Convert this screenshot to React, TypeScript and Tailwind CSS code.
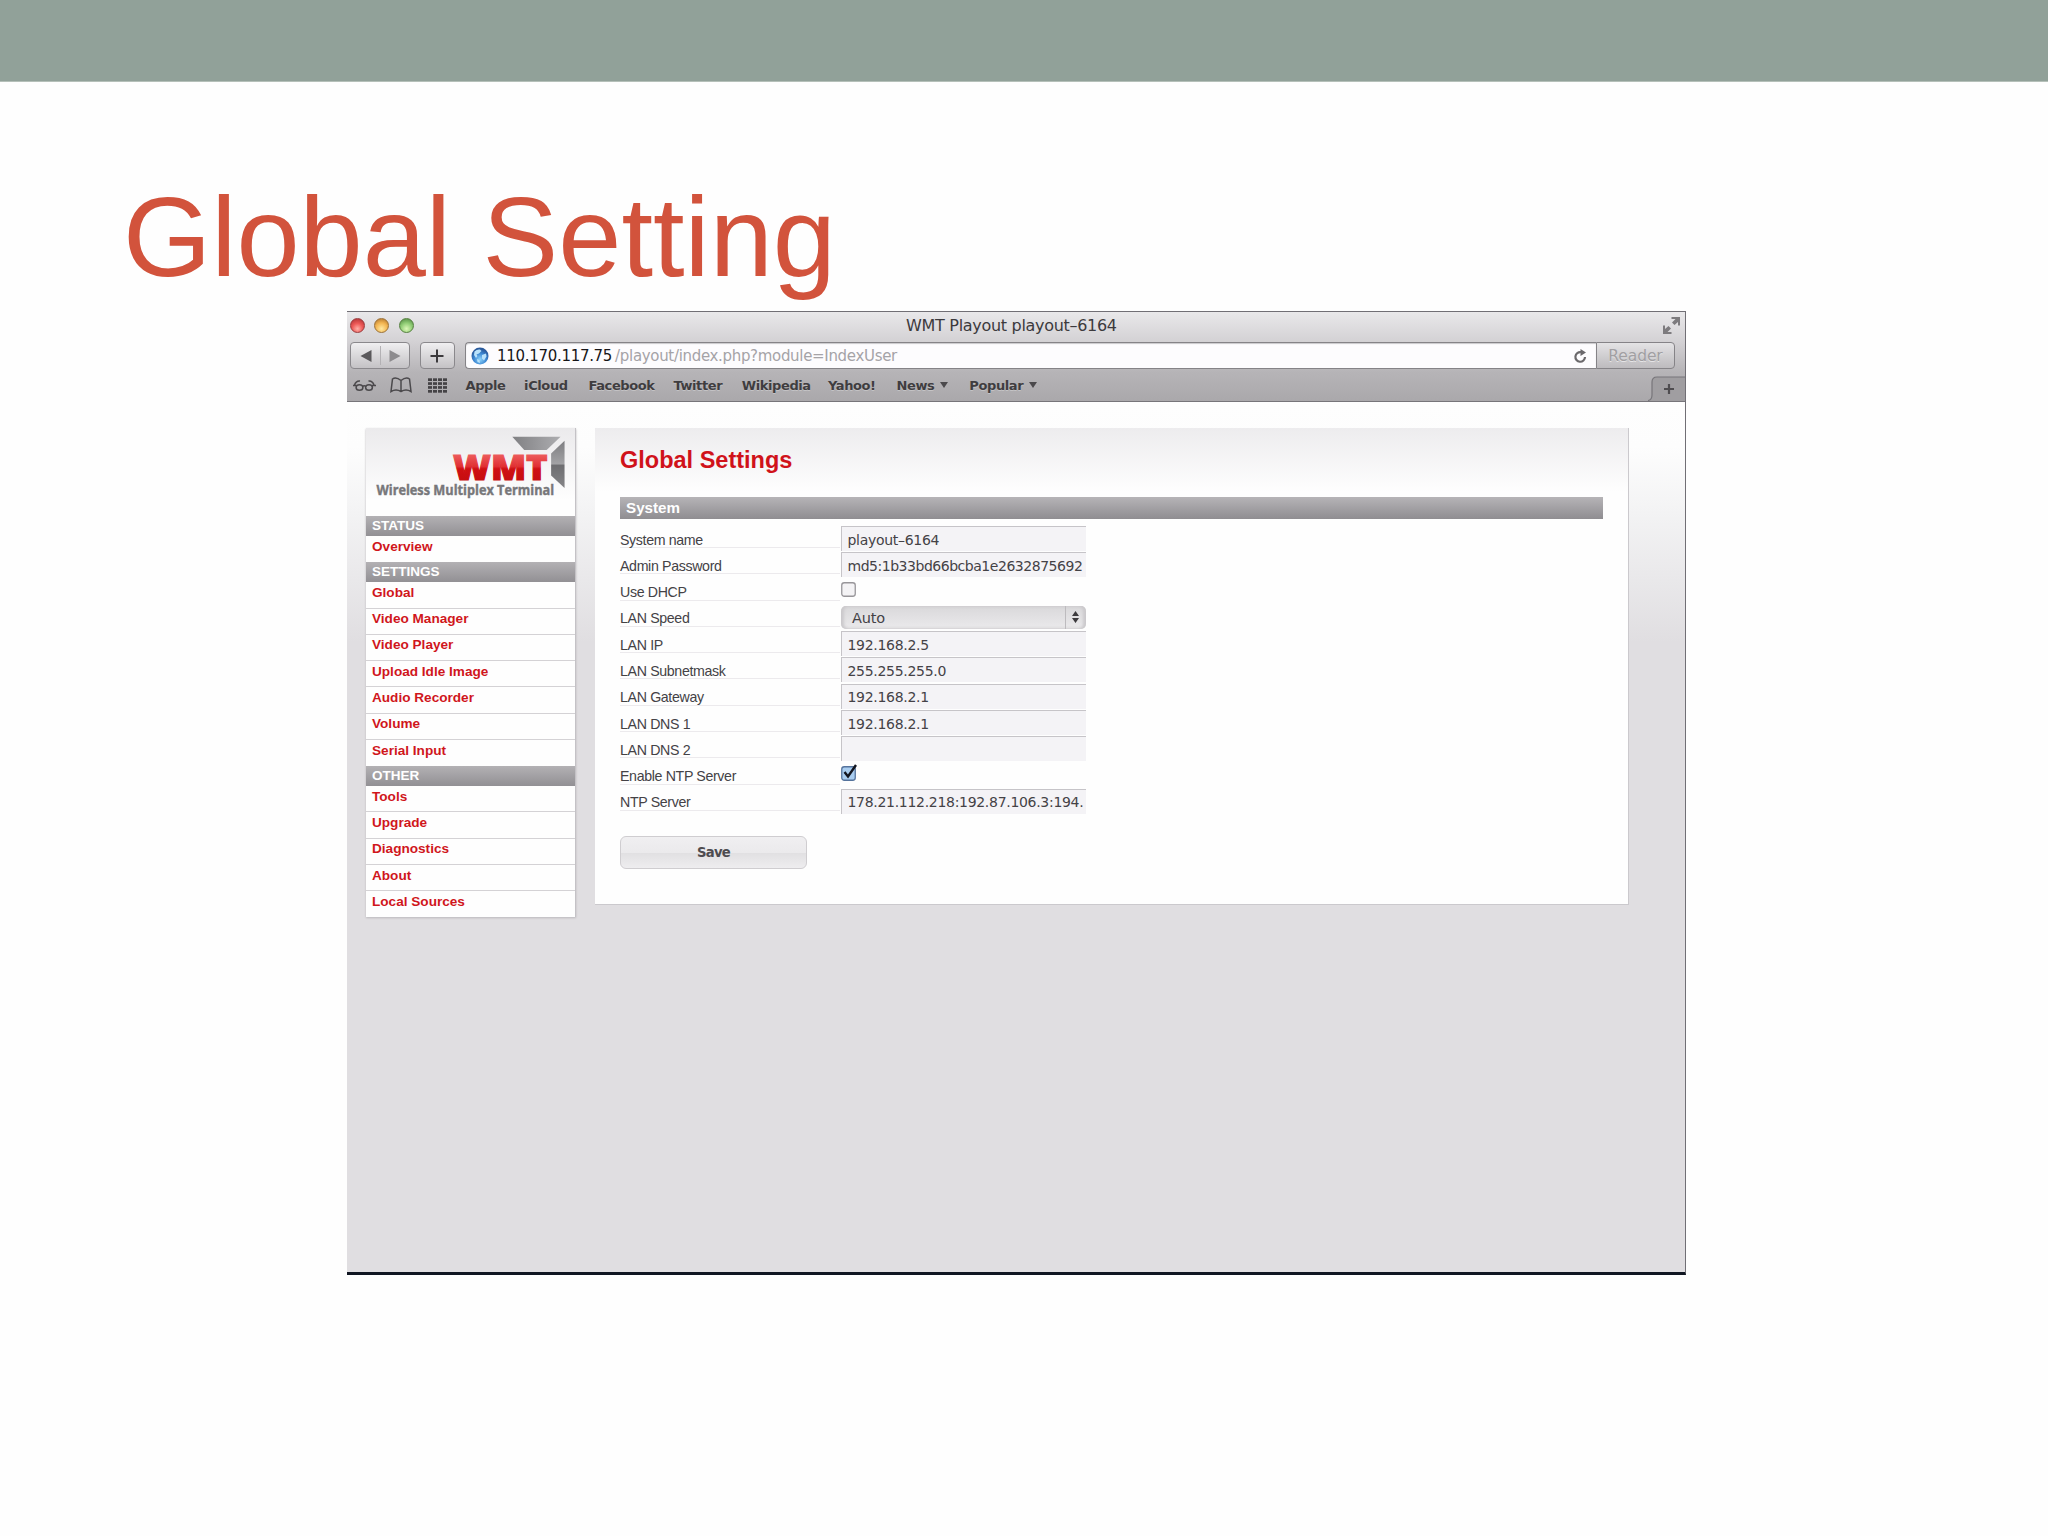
import { ReactNode } from 'react'

interface MenuGroup {
    title: string
    items: string[]
}

interface Field {
    label: string
    type: 'text' | 'checkbox' | 'select'
    value?: string
    checked?: boolean
    tight?: boolean
}

const bookmarks = [
    { label: 'Apple', style: 'w-[58.6px]' },
    { label: 'iCloud', style: 'w-[64.4px]' },
    { label: 'Facebook', style: 'w-[84.9px]' },
    { label: 'Twitter', style: 'w-[68.4px]' },
    { label: 'Wikipedia', style: 'w-[86.2px]' },
    { label: 'Yahoo!', style: 'w-[68.6px]' },
    { label: 'News', style: 'w-[72.8px]', menu: true },
    { label: 'Popular', style: 'w-[80px]', menu: true },
]

const menu: MenuGroup[] = [
    { title: 'STATUS', items: ['Overview'] },
    {
        title: 'SETTINGS',
        items: ['Global', 'Video Manager', 'Video Player', 'Upload Idle Image', 'Audio Recorder', 'Volume', 'Serial Input'],
    },
    { title: 'OTHER', items: ['Tools', 'Upgrade', 'Diagnostics', 'About', 'Local Sources'] },
]

const fields: Field[] = [
    { label: 'System name', type: 'text', value: 'playout–6164' },
    { label: 'Admin Password', type: 'text', value: 'md5:1b33bd66bcba1e2632875692', tight: true },
    { label: 'Use DHCP', type: 'checkbox' },
    { label: 'LAN Speed', type: 'select', value: 'Auto' },
    { label: 'LAN IP', type: 'text', value: '192.168.2.5' },
    { label: 'LAN Subnetmask', type: 'text', value: '255.255.255.0' },
    { label: 'LAN Gateway', type: 'text', value: '192.168.2.1' },
    { label: 'LAN DNS 1', type: 'text', value: '192.168.2.1' },
    { label: 'LAN DNS 2', type: 'text', value: '' },
    { label: 'Enable NTP Server', type: 'checkbox', checked: true },
    { label: 'NTP Server', type: 'text', value: '178.21.112.218:192.87.106.3:194.' },
]

const ToolbarButton = ({ className, children }: { className: string; children: ReactNode }) => (
    <div
        className={`flex h-[27px] items-center rounded-[4px] border border-[#8a888c] bg-linear-to-b from-[#f0eff1] to-[#c4c2c5] ${className}`}
    >
        {children}
    </div>
)

const TitleBar = () => (
    <div className="flex h-[30px] items-center pb-[2px]">
        <div className="mb-[2px] flex w-[160px] gap-[9.5px] pl-[2.5px]">
            <span className="size-[15px] rounded-full border border-[#9a3a3c] bg-[radial-gradient(circle_at_50%_75%,#ffb0a8_0%,#ee5a58_45%,#a82c30_100%)]" />
            <span className="size-[15px] rounded-full border border-[#9b7136] bg-[radial-gradient(circle_at_50%_75%,#ffe9a0_0%,#f3b552_50%,#a86d28_100%)]" />
            <span className="size-[15px] rounded-full border border-[#55803f] bg-[radial-gradient(circle_at_50%_75%,#dcf8b8_0%,#8fcc74_50%,#4b803d_100%)]" />
        </div>
        <div className="flex-1 pl-[399px] font-['DejaVu_Sans',sans-serif] text-[16px] leading-5 tracking-[-0.3px] text-[#3c3a3d]">
            WMT Playout playout–6164
        </div>
        <svg className="mr-[4px] mb-[2px] size-[19px]" viewBox="0 0 19 19" fill="#7d7b7e">
            <path d="M9.500 1H18v8.500h-2V6l-3.500 3-2.500-2.500L13.500 3h-4z" />
            <path d="M9.500 18H1V9.500h2V13l3.500-3L9 12.500 5.500 16h4z" />
        </svg>
    </div>
)

const AddressBar = () => (
    <div className="flex h-[27px] pl-[3px]">
        <ToolbarButton className="w-[60px]">
            <svg className="h-[25px] w-[58px]" viewBox="0 0 58 25">
                <path d="M20.500 7v12L9.500 13z" fill="#5a585b" />
                <path d="M29.500 3v19" stroke="#b3b1b4" />
                <path d="M38.500 7v12l11-6z" fill="#8d8b8e" />
            </svg>
        </ToolbarButton>
        <ToolbarButton className="ml-[10px] w-[35px] justify-center">
            <svg className="mr-px size-[14px]" viewBox="0 0 14 14" stroke="#3b393c" strokeWidth="2">
                <path d="M7 .5v13M.5 7h13" />
            </svg>
        </ToolbarButton>
        <div className="ml-[10px] flex w-[1131px] items-center rounded-l-[4px] border border-r-0 border-[#858387] bg-[#fdfcfe] pl-[6px] font-['DejaVu_Sans',sans-serif] text-[15px] leading-5 shadow-[inset_0_1px_1px_#c9c8cb]">
            <svg className="-ml-px size-[18px]" viewBox="0 0 18 18">
                <defs>
                    <radialGradient id="globe" cx="50%" cy="70%" r="60%">
                        <stop offset="0" stopColor="#8fd4fb" />
                        <stop offset="0.6" stopColor="#3b86d2" />
                        <stop offset="1" stopColor="#2a5a9c" />
                    </radialGradient>
                </defs>
                <circle cx="9" cy="9" r="8.500" fill="url(#globe)" />
                <path
                    d="M3.500 4.500Q6 2 9 2.500L10.500 4 8 6.500 5.500 7.500 6.500 9 5 11 3 8zM11 8l4-1.500.5 3-2.500 4-2-2zM6 12l2.500 1 .5 3-2.500-1z"
                    fill="#b9e2fb"
                />
            </svg>
            <span className="ml-[8px] pt-px tracking-[-0.3px] text-[#171619]">110.170.117.75</span>
            <span className="ml-[3px] pt-px tracking-[-0.32px] text-[#a5a3a7]">/playout/index.php?module=IndexUser</span>
            <svg className="mr-[9px] ml-auto size-[14px]" viewBox="0 0 14 14" fill="none">
                <path d="M8 3.200A4.800 4.800 0 1 0 12 8" stroke="#6b696c" strokeWidth="2.200" />
                <path d="M7.500 0l5.500 3.500-5.500 3.500z" fill="#6b696c" />
            </svg>
        </div>
        <div className="flex w-[79px] items-center justify-center rounded-r-[4px] border border-[#858387] bg-linear-to-b from-[#e4e3e5] to-[#bdbbbe] pt-px font-['DejaVu_Sans',sans-serif] text-[15.5px] leading-5 tracking-[-0.1px] text-[#a19fa2] [text-shadow:0_1px_0_#e6e5e7]">
            Reader
        </div>
    </div>
)

const BookmarksBar = () => (
    <div className="flex h-[32px] pl-[5px]">
        <div className="flex h-[32px] items-center">
            <svg className="h-[14px] w-[25px]" viewBox="0 0 25 14" fill="none" stroke="#4b494c" strokeWidth="1.500">
                <ellipse cx="7.500" cy="9.500" rx="3.400" ry="2.800" />
                <ellipse cx="17" cy="9.500" rx="3.400" ry="2.800" />
                <path d="M1 7.500h3.500M10.500 8.500q1.700-1.300 3.500 0M20 7.500h4M2.500 7Q4 2.500 8 3M22 7Q20.500 2.500 16.500 3" />
            </svg>
            <svg className="ml-[13px] h-[16px] w-[22px]" viewBox="0 0 22 16" fill="none" stroke="#4b494c" strokeWidth="1.500">
                <path d="M11 3.500Q6-.5 2.500 2L1 14.500Q6 11.500 11 14.500 16 11.500 21 14.500L19.500 2Q16-.5 11 3.500zV14.500" />
            </svg>
            <svg className="ml-[16px] h-[15px] w-[19px]" viewBox="0 0 19 15" fill="#454346">
                {[0, 5, 10, 15].map((x) =>
                    [0.3, 4.2, 8.1, 12].map((y) => <rect key={`${x}-${y}`} x={x} y={y} width="4" height="2.700" />)
                )}
            </svg>
        </div>
        <div className="ml-[18.500px] flex h-[33px] items-center font-['DejaVu_Sans',sans-serif] text-[13px] leading-5 font-bold tracking-[-0.4px] text-[#3f3d40] [text-shadow:0_1px_0_#c4c3c5]">
            {bookmarks.map(({ label, style, menu }) => (
                <div key={label} className={`flex shrink-0 items-center ${style}`}>
                    {label}
                    {menu && (
                        <svg className="mb-[2px] ml-[6px] h-[6px] w-[8px]" viewBox="0 0 8 6">
                            <path d="M0 0h8L4 6z" fill="#4b494c" />
                        </svg>
                    )}
                </div>
            ))}
        </div>
        <svg className="mt-[7px] ml-auto h-[25px] w-[37px]" viewBox="0 0 37 25">
            <path d="M0 25Q4 24 4 19V6Q4 1 9 1h28v24z" fill="#a09ea1" />
            <path d="M0 24.500Q4 24 4 19V6Q4 1 9 1h28" fill="none" stroke="#77757a" strokeWidth="1.200" />
            <path d="M21 8v10M16 13h10" stroke="#4f4d50" strokeWidth="2.200" />
        </svg>
    </div>
)

const Logo = () => (
    <svg className="h-[88px] w-full" viewBox="0 0 210 88">
        <defs>
            <linearGradient id="red" x1="0" y1="0" x2="0" y2="1">
                <stop offset="0.200" stopColor="#f06565" />
                <stop offset="0.500" stopColor="#e03033" />
                <stop offset="0.550" stopColor="#cf1013" />
                <stop offset="0.850" stopColor="#c40d10" />
            </linearGradient>
            <linearGradient id="steel" x1="0" y1="0" x2="1" y2="0">
                <stop offset="0" stopColor="#808083" />
                <stop offset="1" stopColor="#adadb0" />
            </linearGradient>
            <linearGradient id="side" x1="0" y1="0" x2="0" y2="1">
                <stop offset="0" stopColor="#7d7d80" />
                <stop offset="0.500" stopColor="#a3a3a6" />
                <stop offset="0.510" stopColor="#6d6d70" />
                <stop offset="1" stopColor="#858588" />
            </linearGradient>
        </defs>
        <path d="M147 8.500h48.500L181.500 22H159z" fill="url(#steel)" />
        <path d="M199.500 12.500V60L186 47.500v-22z" fill="url(#side)" />
        <text
            x="87.500"
            y="52.500"
            textLength="95"
            lengthAdjust="spacingAndGlyphs"
            fill="url(#red)"
            stroke="url(#red)"
            strokeWidth="1.200"
            className="font-['Open_Sans',sans-serif] text-[36px] font-extrabold"
        >
            WMT
        </text>
        <text
            x="10.500"
            y="67"
            textLength="178.500"
            lengthAdjust="spacingAndGlyphs"
            fill="#77777a"
            stroke="#77777a"
            strokeWidth="0.400"
            className="font-['Open_Sans',sans-serif] text-[13.500px] font-bold"
        >
            Wireless Multiplex Terminal
        </text>
    </svg>
)

const Sidebar = () => (
    <div className="h-[488.500px] w-[210px] border-r border-[#c4c2c6] bg-linear-to-b from-[#ebeaec] to-[#fefefe] to-[72px] shadow-[0_1px_2px_#bab8bc]">
        <Logo />
        {menu.map(({ title, items }) => (
            <div key={title}>
                <div className="h-[20px] bg-linear-to-b from-[#b3b1b4] to-[#929094] pl-[6px] text-[13.500px] leading-[20px] font-bold text-white">
                    {title}
                </div>
                {items.map((item, i) => (
                    <div
                        key={item}
                        className={`h-[26.280px] pt-[0.700px] pl-[6px] text-[13.600px] leading-[20px] font-bold text-[#d0161c] ${
                            i < items.length - 1 ? 'border-b border-[#d4d2d5]' : ''
                        }`}
                    >
                        {item}
                    </div>
                ))}
            </div>
        ))}
    </div>
)

const Control = ({ type, value, checked, tight }: Field) => {
    if (type === 'checkbox') {
        return (
            <svg className="h-[20px] w-[18px] overflow-visible" viewBox="0 0 18 20">
                <rect
                    x="0.750"
                    y="3.750"
                    width="13.500"
                    height="13.500"
                    rx="2.500"
                    fill={checked ? '#a9cdf0' : '#f4f3f5'}
                    stroke={checked ? '#55739c' : '#98969a'}
                    strokeWidth="1.300"
                />
                {checked && <path d="M3.500 9l3.500 4.500L15 2" fill="none" stroke="#12151f" strokeWidth="2.400" />}
            </svg>
        )
    }

    if (type === 'select') {
        return (
            <div className="mt-[1px] flex h-[23px] w-[245px] items-center rounded-[5px] bg-linear-to-b from-[#d9d8da] to-[#ebeaec] pl-[11.500px] text-[14.500px] leading-5 tracking-[-0.2px] shadow-[inset_3px_0_3px_#cbc9cc,inset_-3px_0_3px_#cbc9cc]">
                <span className="pt-px">{value}</span>
                <div className="mr-[1px] ml-auto flex h-full w-[20px] items-center justify-center border-l border-[#bdbbbe]">
                    <svg className="h-[12px] w-[7px]" viewBox="0 0 7 12" fill="#3d3b3e">
                        <path d="M0 5h7L3.500 0zM0 7h7l-3.500 5z" />
                    </svg>
                </div>
            </div>
        )
    }

    return (
        <div
            className={`flex h-[25px] w-[245px] items-center overflow-hidden border-t border-l border-[#c6c4c8] bg-[#f4f3f6] pt-px pl-[6px] text-[14px] leading-5 whitespace-nowrap ${
                tight ? 'tracking-[-0.470px]' : 'tracking-[-0.300px]'
            }`}
        >
            {value}
        </div>
    )
}

const SettingsPanel = () => (
    <div className="h-[477px] w-[1034px] border-r border-b border-[#cbc9cd] bg-linear-to-b from-[#edecee] to-[#fefefe] to-[64px] pt-[16px] pl-[25px]">
        <h2 className="text-[23.500px] leading-[32px] font-bold text-[#d0121a]">Global Settings</h2>
        <div className="mt-[21px] h-[22px] w-[983px] bg-linear-to-b from-[#b6b4b7] to-[#8f8d91] pl-[6px] text-[15.200px] leading-[22px] font-bold text-white">
            System
        </div>
        <div className="mt-[7px]">
            {fields.map((field) => (
                <div key={field.label} className="flex h-[26.300px]">
                    <div className="mr-[0.500px] h-[22px] w-[220px] border-b border-[#eceaed] pt-[3.500px] text-[14.200px] leading-[20px] tracking-[-0.350px] text-[#444246]">
                        {field.label}
                    </div>
                    <div className="font-['DejaVu_Sans',sans-serif] text-[#444246]">
                        <Control {...field} />
                    </div>
                </div>
            ))}
        </div>
        <button className="mt-[21px] block h-[33px] w-[187px] rounded-[6px] border border-[#cfcdd0] bg-[linear-gradient(#f0eff1_0%,#ebeaec_50%,#e1e0e2_52%,#eeedef_100%)] pt-px font-['DejaVu_Sans',sans-serif] text-[13.200px] leading-5 font-bold tracking-[-0.700px] text-[#4e4c50]">
            Save
        </button>
    </div>
)

export default function App() {
    return (
        <div className="flex h-[1536px] w-[2048px] flex-col bg-[#fefefe] font-['Liberation_Sans',sans-serif]">
            <div className="h-[82px] shrink-0 border-b border-[#b5c0b9] bg-[#91a199]" />
            <h1 className="mt-[90px] h-[139px] pl-[123px] text-[113.500px] leading-[130px] text-[#d2533c]">Global Setting</h1>
            <div className="ml-[347px] flex h-[964px] w-[1339px] flex-col border-t border-r border-b-[3px] border-t-[#716f75] border-r-[#716f75] border-b-[#101622]">
                <div className="h-[90px] shrink-0 border-b border-[#77757a] bg-[linear-gradient(#e9e8ea_0px,#d3d1d4_30px,#b6b4b7_60px,#aaa8ab_89px)]">
                    <TitleBar />
                    <AddressBar />
                    <BookmarksBar />
                </div>
                <div className="flex flex-1 gap-[19px] bg-[linear-gradient(#fefefe_0px,#fdfdfd_45px,#f3f3f4_110px,#e0dee1_240px)] pt-[26px] pl-[19px]">
                    <Sidebar />
                    <SettingsPanel />
                </div>
            </div>
        </div>
    )
}
